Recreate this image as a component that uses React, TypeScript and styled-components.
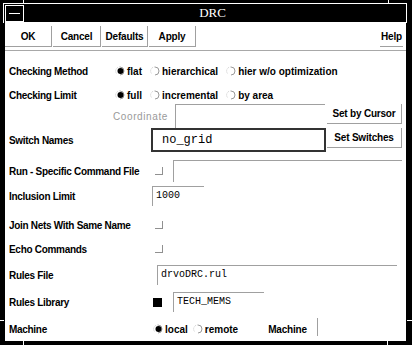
import React from "react";
import styled, { createGlobalStyle } from "styled-components";

const GlobalStyle = createGlobalStyle`
  body {
    margin: 0;
    background: #000;
    font-family: "Liberation Sans", Arial, sans-serif;
  }
`;

const Frame = styled.div`
  position: relative;
  width: 412px;
  height: 345px;
  box-sizing: border-box;
  padding: 4px 6px 4px 5px;
  background: #000;
  display: flex;
  flex-direction: column;
`;

const Tick = styled.div<{ $x: number; $y: number; $w: number; $h: number }>`
  position: absolute;
  left: ${(p) => p.$x}px;
  top: ${(p) => p.$y}px;
  width: ${(p) => p.$w}px;
  height: ${(p) => p.$h}px;
  background: #fff;
`;

const TitleBar = styled.div`
  height: 18px;
  display: flex;
  align-items: center;
`;

const MenuBox = styled.div`
  width: 19px;
  height: 17px;
  box-sizing: border-box;
  border: 1px solid #fff;
  display: flex;
  align-items: center;
  justify-content: center;
  &::after {
    content: "";
    width: 11px;
    height: 1px;
    background: #fff;
  }
`;

const Title = styled.div`
  flex: 1;
  text-align: center;
  color: #fff;
  font-family: "Liberation Serif", "Times New Roman", serif;
  font-size: 13px;
  padding-right: 5px;
`;

const Content = styled.div`
  flex: 1;
  background: #fff;
  color: #000;
  font-size: 10px;
  display: flex;
  flex-direction: column;
`;

const ButtonRow = styled.div`
  display: flex;
  margin-top: 4px;
  height: 22px;
  padding-right: 2px;
  border-bottom: 1px solid #a8a8a8;
  padding-bottom: 2px;
`;

const PushButton = styled.div<{ $w: number; $flat?: boolean }>`
  width: ${(p) => p.$w}px;
  height: 21px;
  box-sizing: border-box;
  border-bottom: 1px solid #a0a0a0;
  border-right: ${(p) => (p.$flat ? "none" : "1px solid #a0a0a0")};
  display: flex;
  align-items: center;
  justify-content: center;
  font-weight: bold;
  font-size: 10px;
  letter-spacing: -0.2px;
  margin-right: 1px;
`;

const Spacer = styled.div`
  flex: 1;
`;

const Row = styled.div<{ $mt: number; $h: number }>`
  display: flex;
  align-items: center;
  margin-top: ${(p) => p.$mt}px;
  height: ${(p) => p.$h}px;
  padding-left: 4px;
  flex-shrink: 0;
`;

const Label = styled.div<{ $w: number }>`
  width: ${(p) => p.$w}px;
  flex-shrink: 0;
  font-size: 10px;
  font-weight: bold;
  letter-spacing: -0.3px;
  white-space: nowrap;
`;

const Option = styled.div<{ $ml: number }>`
  display: flex;
  align-items: center;
  margin-left: ${(p) => p.$ml}px;
  font-weight: bold;
  white-space: nowrap;
  gap: 2px;
`;

const Check = styled.div`
  width: 8px;
  height: 8px;
  box-sizing: border-box;
  border-right: 1px solid #909090;
  border-bottom: 1px solid #909090;
`;

const FilledSquare = styled.div`
  width: 9px;
  height: 9px;
  background: #000;
`;

const Field = styled.div<{ $w: number; $h: number; $ml: number; $top?: boolean }>`
  width: ${(p) => p.$w}px;
  height: ${(p) => p.$h}px;
  margin-left: ${(p) => p.$ml}px;
  box-sizing: border-box;
  border-left: 1px solid #a0a0a0;
  border-top: ${(p) => (p.$top === false ? "none" : "1px solid #a0a0a0")};
  font-family: "Liberation Mono", "Courier New", monospace;
  font-size: 10px;
  padding: 3px 0 0 3px;
  align-self: flex-start;
  white-space: nowrap;
  overflow: hidden;
`;

const StrongField = styled.div`
  width: 175px;
  height: 24px;
  box-sizing: border-box;
  border: 2px solid #333;
  font-family: "Liberation Mono", "Courier New", monospace;
  font-size: 12px;
  padding-left: 9px;
  display: flex;
  align-items: center;
`;

const SideButton = styled.div`
  width: 75px;
  height: 20px;
  margin-left: auto;
  margin-right: 4px;
  box-sizing: border-box;
  border-right: 1px solid #a0a0a0;
  border-bottom: 1px solid #a0a0a0;
  display: flex;
  align-items: center;
  justify-content: center;
  font-weight: bold;
  font-size: 10px;
  letter-spacing: -0.2px;
  align-self: flex-start;
`;

const Dim = styled.div`
  color: #9a9a9a;
  font-size: 10px;
  letter-spacing: 0.6px;
  width: 62px;
  margin-left: 104px;
`;

const MachineLabel = styled.div`
  width: 49px;
  margin-left: 30px;
  font-weight: bold;
  letter-spacing: -0.2px;
  white-space: nowrap;
`;

const Radio: React.FC<{ on?: boolean }> = ({ on }) => (
  <svg width="10" height="10" viewBox="0 0 10 10">
    <path d="M5 1 A4 4 0 0 1 5 9" fill="none" stroke="#9a9a9a" strokeWidth="1" />
    <path d="M5 1 A4 4 0 0 0 2 8" fill="none" stroke="#c8c8c8" strokeWidth="1" strokeDasharray="1 1" />
    {on && <circle cx="5.5" cy="5" r="3" fill="#000" />}
  </svg>
);

const App: React.FC = () => {
  return (
    <Frame>
      <GlobalStyle />
      <Tick $x={3} $y={3} $w={404} $h={1} />
      <Tick $x={23} $y={0} $w={1} $h={4} />
      <Tick $x={388} $y={0} $w={1} $h={4} />
      <Tick $x={3} $y={3} $w={1} $h={20} />
      <Tick $x={406} $y={3} $w={1} $h={20} />
      <Tick $x={0} $y={320} $w={4} $h={1} />
      <Tick $x={407} $y={320} $w={5} $h={1} />
      <Tick $x={23} $y={341} $w={1} $h={4} />
      <Tick $x={387} $y={341} $w={1} $h={4} />
      <TitleBar>
        <MenuBox />
        <Title>DRC</Title>
      </TitleBar>
      <Content>
        <ButtonRow>
          <PushButton $w={47}>OK</PushButton>
          <PushButton $w={48}>Cancel</PushButton>
          <PushButton $w={46}>Defaults</PushButton>
          <PushButton $w={47}>Apply</PushButton>
          <Spacer />
          <PushButton $w={23} $flat>
            Help
          </PushButton>
        </ButtonRow>

        <Row $mt={11} $h={18}>
          <Label $w={106}>Checking Method</Label>
          <Option $ml={0}>
            <Radio on />
            flat
          </Option>
          <Option $ml={8}>
            <Radio />
            hierarchical
          </Option>
          <Option $ml={8}>
            <Radio />
            hier w/o optimization
          </Option>
        </Row>

        <Row $mt={6} $h={18}>
          <Label $w={106}>Checking Limit</Label>
          <Option $ml={0}>
            <Radio on />
            full
          </Option>
          <Option $ml={8}>
            <Radio />
            incremental
          </Option>
          <Option $ml={8}>
            <Radio />
            by area
          </Option>
        </Row>

        <Row $mt={0} $h={24}>
          <Dim>Coordinate</Dim>
          <Field $w={150} $h={24} $ml={0} />
          <SideButton>Set by Cursor</SideButton>
        </Row>

        <Row $mt={0} $h={24}>
          <Label $w={142}>Switch Names</Label>
          <StrongField>no_grid</StrongField>
          <SideButton>Set Switches</SideButton>
        </Row>

        <Row $mt={8} $h={22}>
          <Label $w={146}>Run - Specific Command File</Label>
          <Check />
          <Field $w={229} $h={22} $ml={10} />
        </Row>

        <Row $mt={4} $h={20}>
          <Label $w={143}>Inclusion Limit</Label>
          <Field $w={52} $h={20} $ml={0}>
            1000
          </Field>
        </Row>

        <Row $mt={9} $h={20}>
          <Label $w={146}>Join Nets With Same Name</Label>
          <Check />
        </Row>

        <Row $mt={4} $h={20}>
          <Label $w={146}>Echo Commands</Label>
          <Check />
        </Row>

        <Row $mt={6} $h={20}>
          <Label $w={148}>Rules File</Label>
          <Field $w={240} $h={20} $ml={0}>
            drvoDRC.rul
          </Field>
        </Row>

        <Row $mt={7} $h={20}>
          <Label $w={144}>Rules Library</Label>
          <FilledSquare />
          <Field $w={91} $h={20} $ml={11}>
            TECH_MEMS
          </Field>
        </Row>

        <Row $mt={6} $h={22}>
          <Label $w={144}>Machine</Label>
          <Option $ml={0}>
            <Radio on />
            local
          </Option>
          <Option $ml={5}>
            <Radio />
            remote
          </Option>
          <MachineLabel>Machine</MachineLabel>
          <Field $w={60} $h={18} $ml={0} $top={false} />
        </Row>
      </Content>
    </Frame>
  );
};

export default App;
